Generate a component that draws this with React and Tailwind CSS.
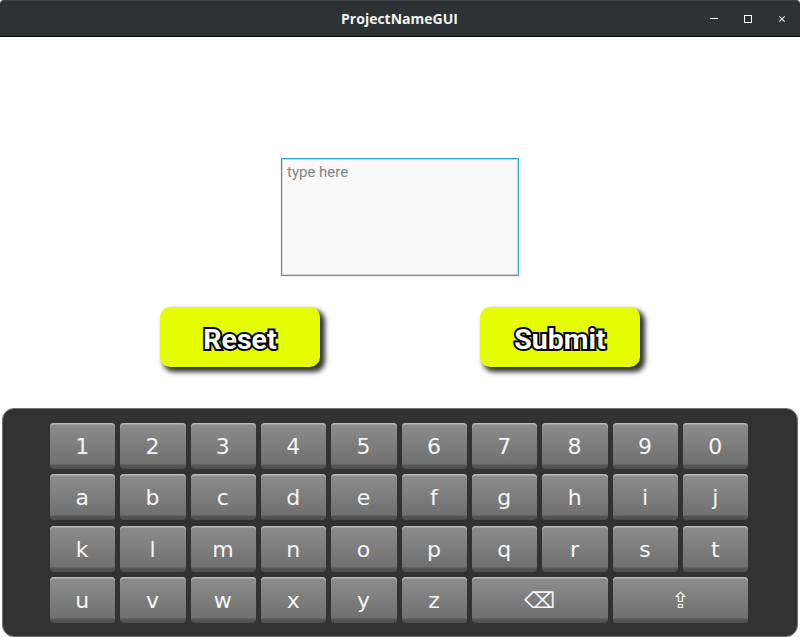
const rows = ["1234567890", "abcdefghij", "klmnopqrst", "uvwxyz"];

function Key({ children, wide = false }) {
  return (
    <button
      className={`${wide ? "col-span-2" : ""} flex items-center justify-center overflow-hidden rounded-[4px] bg-[linear-gradient(to_bottom,#8d8d8d,#707070_41px,#565656_42px,#4f4f4f)] pt-[2px] pr-px font-['DejaVu_Sans',sans-serif] text-[22px] leading-none text-[#f5f5f5] shadow-[inset_0_1.5px_0_#b8b8b8]`}
    >
      {children}
    </button>
  );
}

function ActionButton({ children }) {
  return (
    <button className="flex h-[60px] w-40 items-center justify-center rounded-[10px] bg-[#e5ff00] pt-[6px] font-['Roboto',sans-serif] text-[28.5px] leading-none font-bold text-white shadow-[4px_4px_5px_1px_#000000cc] [-webkit-text-stroke:4px_black] [paint-order:stroke_fill] [stroke-linejoin:round]">
      {children}
    </button>
  );
}

function TitleBar() {
  return (
    <header className="grid h-[37px] grid-cols-[1fr_auto_1fr] items-center rounded-t-[4px] border-t border-b border-t-[#3d4344] border-b-[#0c0e0e] bg-[#2d3234] text-[#f3f3ef]">
      <span />
      <h1 className="ml-[-1px] font-['Open_Sans',sans-serif] text-[14px] leading-none font-bold">ProjectNameGUI</h1>
      <div className="flex items-center justify-end gap-[26px] pr-[14px]">
        <span className="h-px w-2 bg-white" />
        <span className="h-2 w-2 border border-white" />
        <svg className="h-2 w-2" viewBox="0 0 8 8" fill="none" stroke="#e8e8e8" strokeWidth="1.1">
          <path d="M1.3 1.3 6.7 6.7M6.7 1.3 1.3 6.7" />
        </svg>
      </div>
    </header>
  );
}

export default function App() {
  return (
    <div className="flex h-[637px] w-[800px] flex-col overflow-hidden bg-white">
      <TitleBar />
      <main className="flex flex-1 flex-col">
        <textarea
          className="mx-auto mt-[121px] block h-[118px] w-[238px] shrink-0 resize-none border border-[#37a8d4] bg-[#f9f9f9] px-[5px] py-1 font-['Roboto',sans-serif] text-[15px] leading-[18px] shadow-[inset_0_0_0_1px_#d0cfcd,-1px_1px_0_#eeeeee] outline-none placeholder:text-[#858585]"
          placeholder="type here"
        />
        <div className="mt-[31px] flex justify-center gap-40">
          <ActionButton>Reset</ActionButton>
          <ActionButton>Submit</ActionButton>
        </div>
        <section className="mx-[2px] mt-[41px] h-[229px] rounded-[12px] border border-[#777] bg-[#323232] pt-[14px] pl-[47px]">
          <div className="grid h-[200px] w-[698.5px] grid-cols-10 grid-rows-4 gap-x-[5px] gap-y-[5.4px]">
            {rows.flatMap((row) => row.split("").map((c) => <Key key={c}>{c}</Key>))}
            <Key wide>⌫</Key>
            <Key wide>⇪</Key>
          </div>
        </section>
      </main>
    </div>
  );
}
